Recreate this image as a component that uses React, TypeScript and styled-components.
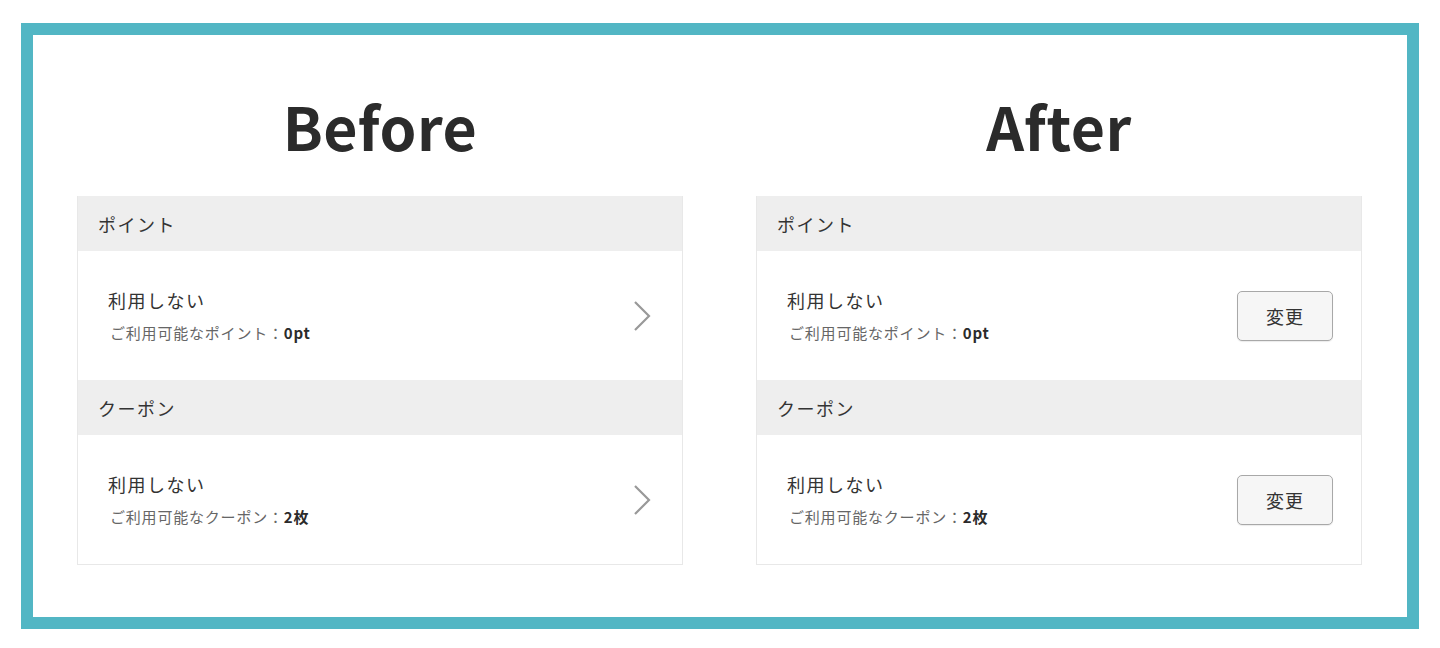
import React from 'react';
import styled, { createGlobalStyle } from 'styled-components';

const GlobalStyle = createGlobalStyle`
  html, body {
    margin: 0;
    padding: 0;
    background: #fff;
  }
  body {
    font-family: 'Noto Sans CJK JP', 'Noto Sans', sans-serif;
    color: #333;
  }
`;

const Page = styled.div`
  padding: 23px 0 0 21px;
`;

const Frame = styled.div`
  box-sizing: border-box;
  width: 1398px;
  height: 606px;
  border: 12px solid #52b6c4;
  display: grid;
  grid-template-columns: 606px 606px;
  column-gap: 73px;
  padding: 0 0 0 44px;
`;

const Column = styled.section`
  display: flex;
  flex-direction: column;
`;

const Title = styled.h1`
  margin: 0;
  height: 161px;
  display: flex;
  align-items: center;
  justify-content: center;
  padding-top: 20px;
  box-sizing: border-box;
  font-family: 'Noto Sans CJK JP', 'Noto Sans', sans-serif;
  font-weight: 700;
  font-size: 59px;
  letter-spacing: 0.5px;
  color: #2b2b2b;
`;

const Panel = styled.div`
  border: 1px solid #e8e8e8;
  border-top: none;
`;

const SectionHeader = styled.div`
  height: 55px;
  background: #eeeeee;
  display: flex;
  align-items: center;
  padding-left: 20px;
  font-size: 18px;
  letter-spacing: 1.5px;
  color: #333;
`;

const Row = styled.div`
  height: 129px;
  display: flex;
  align-items: center;
  justify-content: space-between;
  padding: 0 28px 0 30px;
  background: #fff;
`;

const Info = styled.div`
  display: flex;
  flex-direction: column;
  gap: 9px;
  margin-top: -1px;
`;

const Label = styled.div`
  font-size: 18px;
  letter-spacing: 1.5px;
  color: #333;
`;

const Sub = styled.div`
  font-size: 15px;
  letter-spacing: 0.8px;
  color: #666;
  padding-left: 2px;

  b {
    color: #2b2b2b;
    font-weight: 700;
  }
`;

const Chevron = styled.svg`
  width: 18px;
  height: 30px;
  margin-right: 3px;
`;

const ChangeButton = styled.button`
  width: 96px;
  height: 50px;
  border: 1.5px solid #a8a8a8;
  border-radius: 5px;
  background: #f6f6f6;
  font-family: 'Noto Sans CJK JP', sans-serif;
  font-size: 18px;
  letter-spacing: 1px;
  color: #333;
  box-shadow: 0 1px 1px rgba(0, 0, 0, 0.08);
  cursor: pointer;
`;

type Item = { header: string; sub: string; value: string };

const items: Item[] = [
  { header: 'ポイント', sub: 'ご利用可能なポイント：', value: '0pt' },
  { header: 'クーポン', sub: 'ご利用可能なクーポン：', value: '2枚' },
];

function Arrow() {
  return (
    <Chevron viewBox="0 0 18 30">
      <polyline points="2,1 16,15 2,29" fill="none" stroke="#999" strokeWidth="2.2" />
    </Chevron>
  );
}

function Card({ after }: { after: boolean }) {
  return (
    <Panel>
      {items.map((item) => (
        <React.Fragment key={item.header}>
          <SectionHeader>{item.header}</SectionHeader>
          <Row>
            <Info>
              <Label>利用しない</Label>
              <Sub>
                {item.sub}
                <b>{item.value}</b>
              </Sub>
            </Info>
            {after ? <ChangeButton>変更</ChangeButton> : <Arrow />}
          </Row>
        </React.Fragment>
      ))}
    </Panel>
  );
}

export default function App() {
  return (
    <Page>
      <GlobalStyle />
      <Frame>
        <Column>
          <Title>Before</Title>
          <Card after={false} />
        </Column>
        <Column>
          <Title>After</Title>
          <Card after />
        </Column>
      </Frame>
    </Page>
  );
}
